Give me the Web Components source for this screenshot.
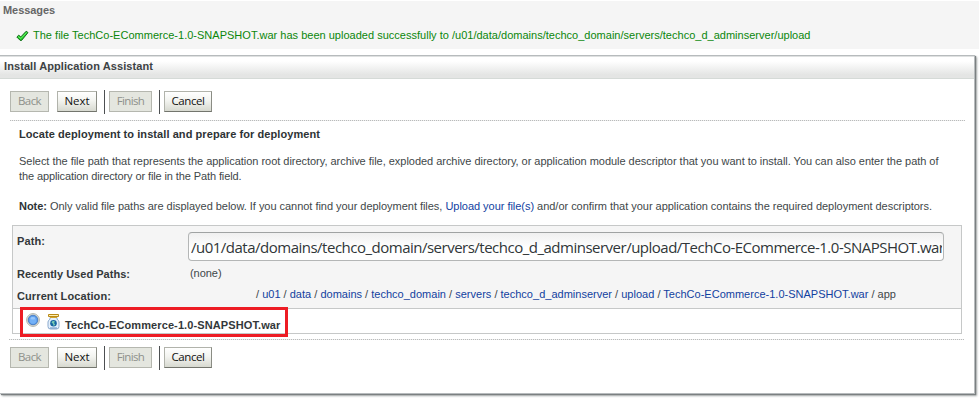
<!DOCTYPE html>
<html lang="en"><head><meta charset="utf-8"><title>Install Application Assistant</title>
<style>
body{margin:0;background:#fff;width:980px;height:401px;overflow:hidden;font:11px/15px "Liberation Sans",Arial,sans-serif;color:#414749}
</style></head><body>
<install-page></install-page>
<script>
const define=(name,html,after)=>{
  const t=document.createElement('template');t.innerHTML=html;
  customElements.define(name,class extends HTMLElement{
    connectedCallback(){
      if(this.shadowRoot)return;
      this.attachShadow({mode:'open'}).append(t.content.cloneNode(true));
      if(after)after(this);
    }
  });
};

/* One line of text, tracked evenly to fill the width given in "w". */
define('fit-text',`<style>:host{display:block;width:max-content;white-space:nowrap}</style><slot></slot>`,el=>{
  const w=+el.getAttribute('w');
  const n=el.textContent.length;
  let s=0.001;
  for(let i=0;i<3;i++){
    el.style.letterSpacing=s+'px';
    s+=(w-el.getBoundingClientRect().width)/n;
  }
  el.style.letterSpacing=s.toFixed(4)+'px';
});

define('check-icon',`<style>:host{display:block;width:13px;height:12px}svg{display:block}</style>
<svg width="13" height="12" viewBox="0 0 13 12"><path d="M.8 7 L2.8 5.2 L4.8 6.9 L10.2 1.2 L12 2.6 L5.6 10.4 L4.2 10.4 Z" fill="#1fce2a" stroke="#0a5f10" stroke-width=".9" stroke-linejoin="round"/><path d="M2.2 6.6 L4.9 8.5 L10.7 2.4" fill="none" stroke="#6cf066" stroke-width="1"/></svg>`);

define('radio-dot',`<style>:host{display:block;width:14px;height:14px}svg{display:block}</style>
<svg width="14" height="14" viewBox="0 0 14 14"><circle cx="7" cy="7" r="6.4" fill="#dfe2dc" stroke="#a9aba2" stroke-width=".9"/><circle cx="7" cy="7" r="4.8" fill="#5c9fee" stroke="#3b6db5" stroke-width=".8"/><circle cx="7" cy="7.6" r="3.2" fill="#74b1f7"/><ellipse cx="6.8" cy="5.2" rx="2.4" ry="1.2" fill="#98c6fa"/></svg>`);

define('jar-icon',`<style>:host{display:block;width:13px;height:16px}svg{display:block}</style>
<svg width="13" height="16" viewBox="0 0 13 16"><path d="M3 3.5V5.2Q1 6.4 1 8V12.5Q1 15 3.5 15H9.5Q12 15 12 12.5V8Q12 6.4 10 5.2V3.5Z" fill="#e4f0fc" stroke="#8ba9cd"/><path d="M1.5 .5H11.5V2.5H1.5Z" fill="#fff0b0" stroke="#b98916"/><path d="M3 3.5H10" stroke="#d3a32e"/><circle cx="6.5" cy="9.3" r="3.3" fill="#1765a2"/><path d="M5.8 6.8L8 7.4L7 9L8.2 10.8L6.6 12L6 9.8L4.5 8.6Z" fill="#78cbb3"/><path d="M3 14H10" stroke="#6991c3"/></svg>`);

define('push-button',`<style>
:host{display:flex;box-sizing:border-box;height:21px;align-items:center;justify-content:center;border:1px solid #b1b3ab;border-right-color:#8a8c84;border-bottom-color:#73756d;background:linear-gradient(#fff,#f3f4f0 45%,#d7d9d0);color:#111;font:11.5px/18px "Open Sans","Noto Sans",sans-serif}
:host([disabled]){background:#e4e6df;border-color:#b5b7af;color:#8e918b}
fit-text,::slotted(*){margin-top:-1px}
</style><slot></slot>`);

define('button-bar',`<style>
:host{display:flex;align-items:flex-start;height:24px}
push-button{margin-top:1px}
.next{margin-left:8px}
i{width:1px;height:24px;background:#4d5052;margin:0 4px 0 7px}
</style>
<push-button disabled style="width:39px"><fit-text w="23">Back</fit-text></push-button>
<push-button class="next" style="width:40px"><fit-text w="25">Next</fit-text></push-button><i></i>
<push-button disabled style="width:43px"><fit-text w="27.5">Finish</fit-text></push-button><i></i>
<push-button style="width:48px"><fit-text w="33">Cancel</fit-text></push-button>`);

define('message-area',`<style>
:host{display:block;box-sizing:border-box;width:979px;height:48px;margin-top:1px;background:#f5f5f5;padding:2px 0 0 3px}
b{color:#666}
.m{display:flex;align-items:center;gap:4px;color:#0b870b;padding:10px 0 0 13px}
</style><b><fit-text w="52">Messages</fit-text></b>
<div class="m"><check-icon></check-icon><fit-text w="777.5">The file TechCo-ECommerce-1.0-SNAPSHOT.war has been uploaded successfully to /u01/data/domains/techco_domain/servers/techco_d_adminserver/upload</fit-text></div>`);

define('path-field',`<style>
:host{display:block;box-sizing:border-box;width:756px;height:29px;border:1px solid #b4b6b6;border-top-color:#a0a3a3;border-radius:4px;background:linear-gradient(#f0f0f0,#fff 55%);padding:0 1px 0 2px;font:15px/28px "Open Sans","Noto Sans",sans-serif;color:#303638}
div{overflow:hidden;height:27px}
</style><div><slot></slot></div>`);

define('path-crumbs',`<style>:host{display:block}a{color:#123f9f}</style>
<fit-text w="640">/ <a>u01</a> / <a>data</a> / <a>domains</a> / <a>techco_domain</a> / <a>servers</a> / <a>techco_d_adminserver</a> / <a>upload</a> / <a>TechCo-ECommerce-1.0-SNAPSHOT.war</a> / app</fit-text>`);

define('path-table',`<style>
:host{display:block;box-sizing:border-box;width:950px;height:109px;border:1px solid #c6c8c8}
.top{display:grid;box-sizing:border-box;grid-template-columns:171px 1fr;grid-template-rows:33px 22px 1fr;height:83px;padding:6px 0 0 4px;background:#f5f5f5;border-bottom:1px solid #c6c8c8}
b{color:#33383a;padding-top:2px}
.none{padding:1px 0 0 2px}
path-crumbs{padding-left:68px}
.row{display:flex;box-sizing:border-box;width:268px;height:30px;margin:-2px 0 0 7px;border:3px solid #ed1c24;position:relative;padding:3px 0 0 3px}
jar-icon{margin:1px 0 0 7px}
.row b{padding:5px 0 0 5px}
</style>
<div class="top">
<b><fit-text w="28">Path:</fit-text></b><path-field><fit-text w="753.5">/u01/data/domains/techco_domain/servers/techco_d_adminserver/upload/TechCo-ECommerce-1.0-SNAPSHOT.war</fit-text></path-field>
<b><fit-text w="113">Recently Used Paths:</fit-text></b><div class="none"><fit-text w="31.5">(none)</fit-text></div>
<b><fit-text w="94">Current Location:</fit-text></b><path-crumbs></path-crumbs>
</div>
<div class="row"><radio-dot></radio-dot><jar-icon></jar-icon><b><fit-text w="215.5">TechCo-ECommerce-1.0-SNAPSHOT.war</fit-text></b></div>`);

define('dotted-rule',`<style>:host{display:block;width:955px;height:1px;background:repeating-linear-gradient(90deg,#b9bbbb 0 1px,#eee 1px 2px)}</style>`);

define('assistant-panel',`<style>
:host{display:block;box-sizing:border-box;width:975px;height:339px;margin-top:6px;border:solid #b7bbbd;border-width:1px 1px 1px 0;box-shadow:1px 1px 1px #7b8081,2px 2px 2px #a9adad;background:#fff}
header{box-sizing:border-box;height:23px;padding:2px 0 0 4px;border-top:1px solid #dfe1e1;border-bottom:1px solid #d5dad7;background:linear-gradient(#fff 20%,#e4e5e4 85%)}
header b{color:#3d4244}
button-bar{margin:11px 0 0 10px}
dotted-rule{margin:6px 0 0 10px}
.copy{padding:6px 0 0 19px;height:98px;box-sizing:border-box}
.copy p{margin:12px 0 15px}
b{color:#2e3335}
a{color:#123f9f}
path-table{margin:6px 0 0 12px}
.last{margin:5px 0 0 9px}
.bottom{margin-top:6px}
</style>
<header><b><fit-text w="149">Install Application Assistant</fit-text></b></header>
<button-bar></button-bar><dotted-rule></dotted-rule>
<div class="copy"><b><fit-text w="301">Locate deployment to install and prepare for deployment</fit-text></b>
<p><fit-text w="919.5">Select the file path that represents the application root directory, archive file, exploded archive directory, or application module descriptor that you want to install. You can also enter the path of</fit-text>
<fit-text w="222.5">the application directory or file in the Path field.</fit-text></p>
<fit-text w="913"><b>Note:</b> Only valid file paths are displayed below. If you cannot find your deployment files, <a>Upload your file(s)</a> and/or confirm that your application contains the required deployment descriptors.</fit-text></div>
<path-table></path-table><dotted-rule class="last"></dotted-rule><button-bar class="bottom"></button-bar>`);

define('install-page',`<style>:host{display:flow-root}</style><message-area></message-area><assistant-panel></assistant-panel>`);
</script></body></html>
